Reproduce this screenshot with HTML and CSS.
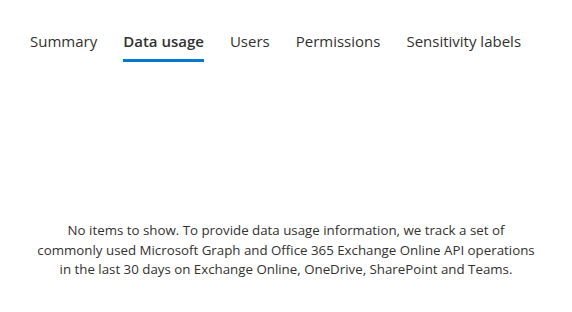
FILE: index.html
```html
<!DOCTYPE html>
<html>
<head>
<meta charset="utf-8">
<link rel="stylesheet" href="styles.css">
</head>
<body>
<nav class="tabs">
  <div class="tab">Summary</div>
  <div class="tab active">Data usage</div>
  <div class="tab">Users</div>
  <div class="tab">Permissions</div>
  <div class="tab">Sensitivity labels</div>
</nav>
<p class="empty">No items to show. To provide data usage information, we track a set of<br>commonly used Microsoft Graph and Office 365 Exchange Online API operations<br>in the last 30 days on Exchange Online, OneDrive, SharePoint and Teams.</p>
</body>
</html>
```
FILE: styles.css
```css
html, body { margin: 0; padding: 0; background: #fff; }
body { font-family: "Open Sans", "Noto Sans", sans-serif; color: #323130; width: 572px; height: 312px; overflow: hidden; }
.tabs { display: flex; gap: 26px; padding: 29px 0 0 30px; }
.tab { font-size: 15px; line-height: 24px; padding-bottom: 6px; border-bottom: 3px solid transparent; }
.tab.active { font-weight: 600; border-bottom-color: #0078d4; }
.empty { margin: 159px 0 0; text-align: center; font-size: 13.3px; line-height: 19.5px; }
```
